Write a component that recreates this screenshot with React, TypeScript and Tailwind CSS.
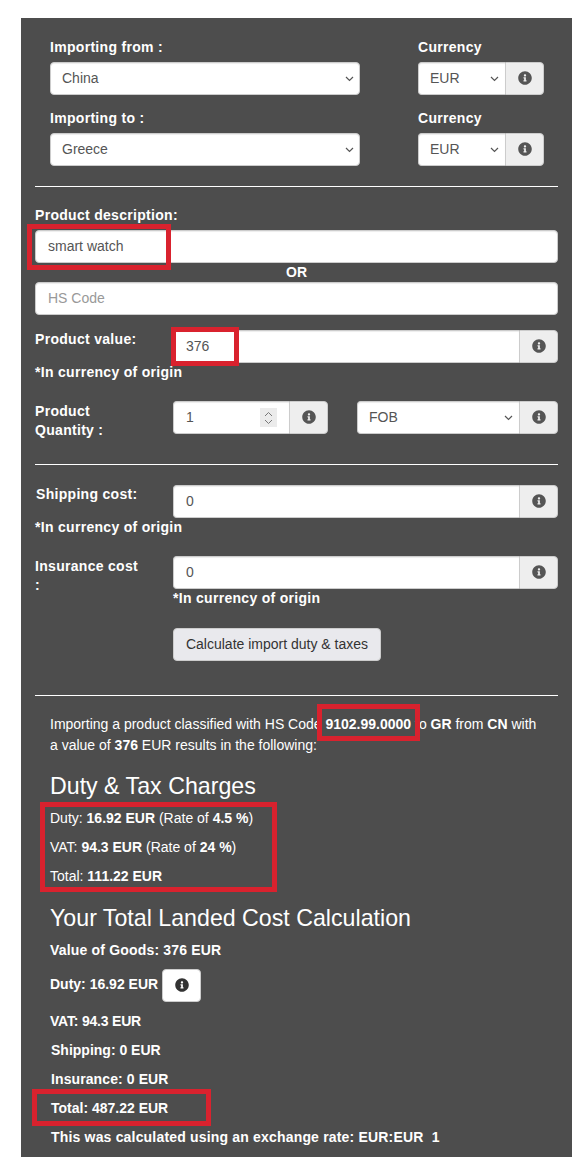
import { FaInfoCircle } from 'react-icons/fa';

const control =
  'h-[33px] rounded-[4px] border border-[#ccc] bg-white px-3 text-[14px] text-[#555] outline-none shadow-[inset_0_1px_1px_rgba(0,0,0,0.075)]';
const label = 'font-bold tracking-[0.3px]';

function Info() {
  return (
    <span className="flex h-[33px] w-[39px] shrink-0 items-center justify-center rounded-r-[4px] border border-[#ccc] bg-[#eee] pb-[1px] text-[#555]">
      <FaInfoCircle size={14} />
    </span>
  );
}

function InputGroup({ value }: { value: string }) {
  return (
    <div className="flex flex-1">
      <input defaultValue={value} className={`${control} min-w-0 flex-1 rounded-r-none border-r-0 pb-[2px]`} />
      <Info />
    </div>
  );
}

function Select({ value, className }: { value: string; className: string }) {
  return (
    <div className="relative min-w-0 flex-1">
      <select defaultValue={value} className={`${control} w-full appearance-none pb-[2px] pl-[11px] ${className}`}>
        <option>{value}</option>
      </select>
      <svg
        className="pointer-events-none absolute right-[6px] top-[14px] text-[#555]"
        width="9"
        height="6"
        viewBox="0 0 9 6"
        fill="none"
        stroke="currentColor"
        strokeWidth="1.2"
      >
        <path d="M1 1l3.5 3.5L8 1" />
      </svg>
    </div>
  );
}

function CountryRow({ title, country, className }: { title: string; country: string; className: string }) {
  return (
    <div className={`ml-[15px] flex ${className}`}>
      <div className="w-[310px]">
        <p className={`mb-[5px] h-[20px] ${label}`}>{title}</p>
        <Select value={country} className="" />
      </div>
      <div className="ml-[58px] w-[126px]">
        <p className={`mb-[5px] h-[20px] ${label}`}>Currency</p>
        <div className="flex">
          <Select value="EUR" className="rounded-r-none border-r-0" />
          <Info />
        </div>
      </div>
    </div>
  );
}

// red annotation boxes drawn over the screenshot
function Mark({ className }: { className: string }) {
  return <div className={`pointer-events-none absolute border-[5px] border-[#d9222e] ${className}`} />;
}

export default function App() {
  return (
    <div className="relative h-[1170px] w-[585px] bg-white pt-[18px] text-[14px] leading-[20px] text-white [font-family:'Liberation_Sans',Arial,sans-serif]">
      <div className="ml-[21px] h-[1139px] w-[551px] bg-[#4d4d4d] px-[14px] pt-[19px]">
        <CountryRow title="Importing from :" country="China" className="" />
        <CountryRow title="Importing to :" country="Greece" className="mt-[13px]" />

        <hr className="mt-[20px] border-t border-white" />

        <p className={`mt-[18px] ${label}`}>Product description:</p>
        <input defaultValue="smart watch" className={`${control} mt-[5px] block w-full pb-[2px]`} />
        <p className="h-[19px] text-center font-bold leading-[19px]">OR</p>
        <input placeholder="HS Code" className={`${control} block w-full pb-[2px] placeholder:text-[#999]`} />

        <div className="mt-[15px] flex">
          <p className={`-mt-[1px] w-[138px] ${label}`}>Product value:</p>
          <InputGroup value="376" />
        </div>
        <p className={`-mt-[1px] h-[20px] ${label}`}>*In currency of origin</p>

        <div className="mt-[19px] flex h-[33px]">
          <p className={`w-[138px] pr-[40px] pt-[1px] leading-[19px] ${label}`}>Product Quantity :</p>
          <div className="flex w-[155px]">
            <div className={`${control} flex flex-1 items-center justify-between rounded-r-none border-r-0 pb-[2px]`}>
              <span>1</span>
              <span className="mt-[2px] flex h-[19px] w-[17px] flex-col items-center justify-center gap-[2px] bg-[#ebebeb] text-[#777]">
                <svg width="9" height="6" viewBox="0 0 9 6" fill="none" stroke="currentColor"><path d="M1 5l3.5-3.5L8 5" /></svg>
                <svg width="9" height="6" viewBox="0 0 9 6" fill="none" stroke="currentColor"><path d="M1 1l3.5 3.5L8 1" /></svg>
              </span>
            </div>
            <Info />
          </div>
          <div className="ml-[29px] flex flex-1">
            <Select value="FOB" className="rounded-r-none border-r-0" />
            <Info />
          </div>
        </div>

        <hr className="mt-[30px] border-t border-white" />

        <div className="mt-[20px] flex">
          <p className={`-mt-[1px] w-[138px] pl-[1px] ${label}`}>Shipping cost:</p>
          <InputGroup value="0" />
        </div>
        <p className={`-mt-[1px] h-[20px] ${label}`}>*In currency of origin</p>

        <div className="mt-[19px] flex h-[33px]">
          <p className={`w-[138px] pr-[30px] pt-[1px] leading-[19px] ${label}`}>Insurance cost :</p>
          <InputGroup value="0" />
        </div>
        <div className="ml-[138px]">
          <p className={`-mt-[1px] h-[20px] ${label}`}>*In currency of origin</p>
          <button className="mt-[20px] block h-[33px] w-[208px] rounded-[4px] border border-[#ccc] bg-[#e9e9ed] pb-[2px] text-[14px] text-[#333]">
            Calculate import duty &amp; taxes
          </button>
        </div>

        <hr className="mt-[34px] border-t border-white" />

        <div className="pl-[15px]">
          <p className="mt-[18px] w-[492px] leading-[21px]">
            Importing a product classified with HS Code <b>9102.99.0000</b> to <b>GR</b> from <b>CN</b> with a value of <b>376</b> EUR results in the following:
          </p>
          <h3 className="mt-[17px] text-[23.2px] leading-[26px]">Duty &amp; Tax Charges</h3>
          <p className="mt-[9px]">Duty: <b>16.92 EUR</b> (Rate of <b>4.5 %</b>)</p>
          <p className="mt-[9px]">VAT: <b>94.3 EUR</b> (Rate of <b>24 %</b>)</p>
          <p className="mt-[9px]">Total: <b>111.22 EUR</b></p>
          <h3 className="mt-[19px] text-[23.2px] leading-[26px]">Your Total Landed Cost Calculation</h3>
          <div className="font-bold">
            <p className="mt-[9px] tracking-[0.18px]">Value of Goods: 376 EUR</p>
            <div className="mt-[9px] flex items-center">
              <p className="mb-[3px]">Duty: 16.92 EUR</p>
              <span className="ml-[4px] flex h-[33px] w-[39px] items-center justify-center rounded-[4px] border border-[#ccc] bg-white pb-[1px] text-[#333]">
                <FaInfoCircle size={14} />
              </span>
            </div>
            <p className="mt-[9px] tracking-[-0.2px]">VAT: 94.3 EUR</p>
            <p className="mt-[9px] pl-[1px]">Shipping: 0 EUR</p>
            <p className="mt-[9px] pl-[1px] tracking-[0.1px]">Insurance: 0 EUR</p>
            <p className="mt-[9px] pl-[1px]">Total: 487.22 EUR</p>
            <p className="mt-[9px] pl-[1px] tracking-[0.18px]">This was calculated using an exchange rate: EUR:EUR&nbsp; 1</p>
          </div>
        </div>
      </div>

      <Mark className="left-[27px] top-[224px] h-[46px] w-[144px]" />
      <Mark className="left-[171px] top-[327px] h-[39px] w-[68px]" />
      <Mark className="left-[317px] top-[704px] h-[37px] w-[103px]" />
      <Mark className="left-[40px] top-[802px] h-[90px] w-[237px]" />
      <Mark className="left-[32px] top-[1089px] h-[37px] w-[179px]" />
    </div>
  );
}
